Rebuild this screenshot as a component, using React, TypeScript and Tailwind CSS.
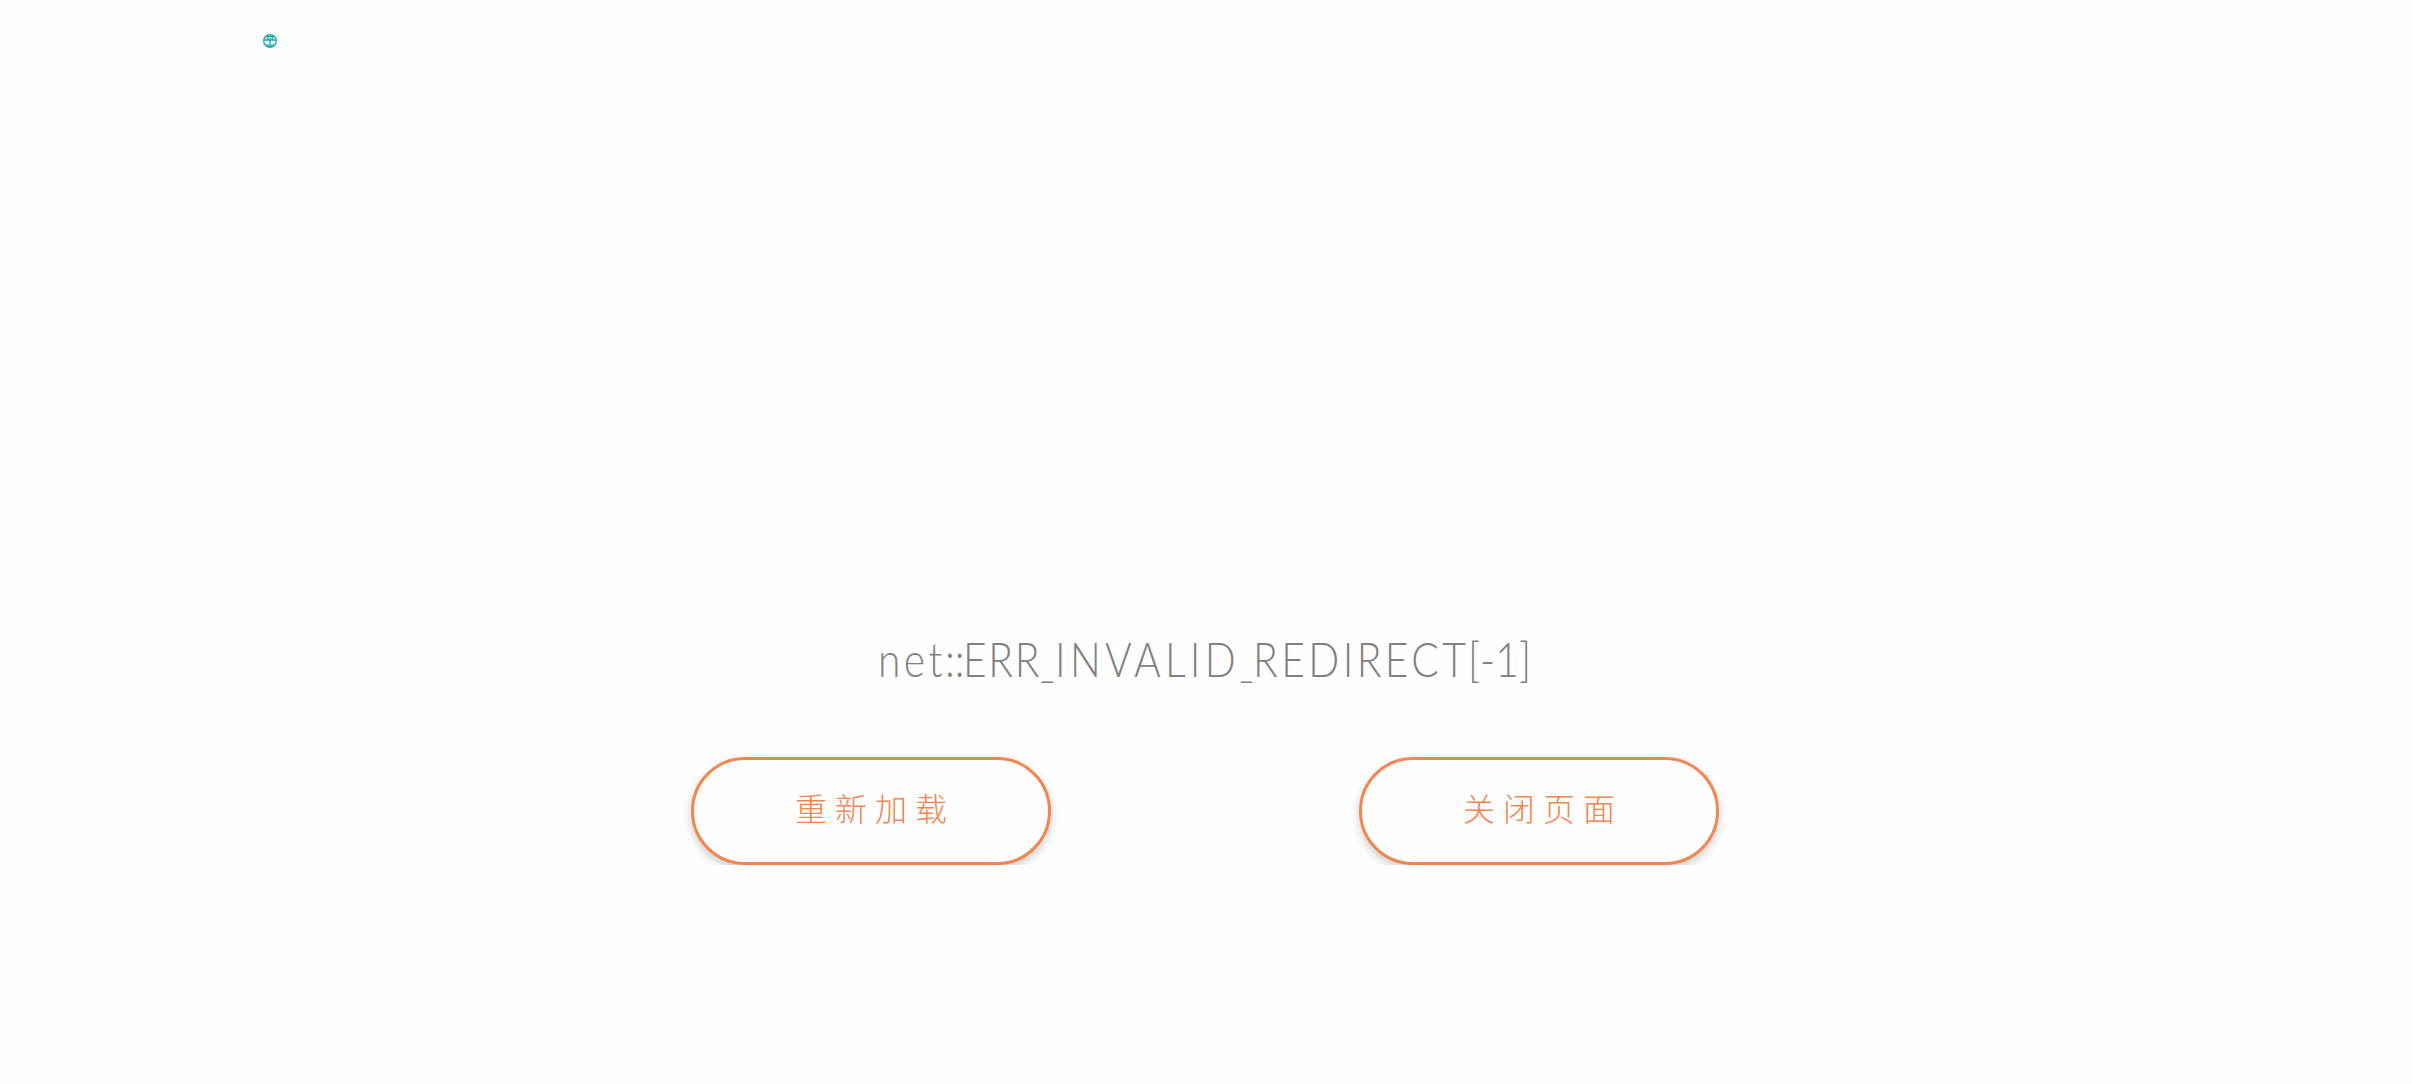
import React from 'react';

type ErrorAction = { label: string; className: string };
type MessagePart = { text: string; className: string };

const ACTIONS: ErrorAction[] = [
  { label: '重新加载', className: 'ml-[691px]' },
  { label: '关闭页面', className: 'ml-[308px]' },
];

const MESSAGE: MessagePart[] = [
  { text: 'net', className: 'w-[67px] scale-x-85 tracking-[4px]' },
  { text: '::', className: 'w-[18px] scale-x-85' },
  { text: 'ERR', className: 'w-[78px] scale-x-85 tracking-[2px]' },
  { text: '_', className: 'w-[14px] scale-x-60' },
  { text: 'INVALID', className: 'w-[185px] scale-x-85 tracking-[5px]' },
  { text: '_', className: 'w-[13px] scale-x-60' },
  { text: 'REDIRECT', className: 'w-[215px] scale-x-85 tracking-[4px]' },
  { text: '[-1]', className: 'w-[60px] scale-x-85' },
];

function SiteIcon() {
  return (
    <svg width="14" height="14" viewBox="0 0 14 14" aria-hidden="true">
      <circle cx="7" cy="7" r="6.3" fill="#e2f7f7" stroke="#26a9ac" strokeWidth="1.4" />
      <path d="M2 2.5h10M0.5 6h13M7 6v6M4.8 3v3M7.2 4v2M9.4 3v3" stroke="#26a9ac" strokeWidth="1.3" />
      <path d="M2.5 10.5h3l1.5 2 1.5-2h3L9 13H5Z" fill="#26a9ac" />
    </svg>
  );
}

export default function App() {
  return (
    <div className="flex h-[1084px] w-full flex-col overflow-hidden bg-[#fefefe] font-[Lato,'Noto_Sans_CJK_SC',sans-serif]">
      <header className="h-[620px] pl-[263px] pt-[34px]">
        <SiteIcon />
      </header>
      <main>
        <p className="flex h-[80px] whitespace-nowrap pl-[878px] pt-[3px] text-[48px] font-light leading-[72px] text-[#808080]">
          {MESSAGE.map((part, i) => (
            <span key={i} className={`inline-block shrink-0 origin-left ${part.className}`}>
              {part.text}
            </span>
          ))}
        </p>
        <div className="flex overflow-y-clip pt-[57px]">
          {ACTIONS.map((action) => (
            <button
              key={action.label}
              type="button"
              className={`h-[108px] w-[360px] shrink-0 rounded-full border-[3px] border-[#f28550] bg-[#fefefe] pb-1 pl-2 text-[32px] font-light tracking-[8px] text-[#f28550] shadow-[0_4px_10px_rgba(0,0,0,0.2)] ${action.className}`}
            >
              {action.label}
            </button>
          ))}
        </div>
      </main>
    </div>
  );
}
